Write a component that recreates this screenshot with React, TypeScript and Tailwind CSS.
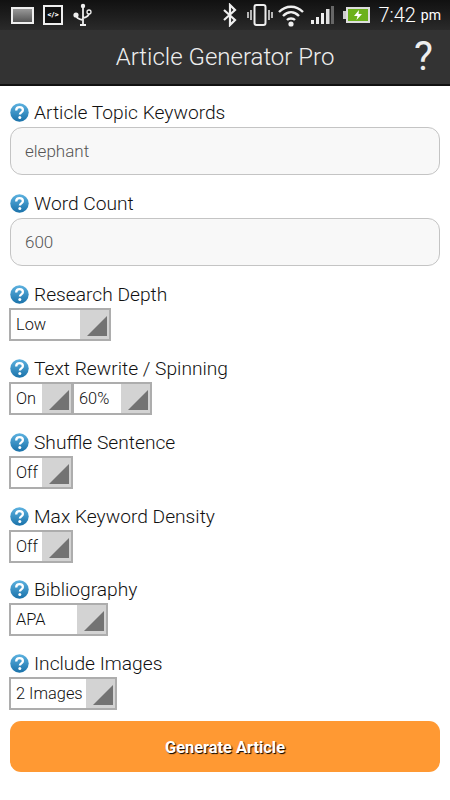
const font = { fontFamily: '"Roboto", "Open Sans", sans-serif' };

function HelpIcon() {
  return (
    <svg width="19" height="19" viewBox="0 0 19 19" className="shrink-0 -mt-[2px]">
      <defs>
        <linearGradient id="helpBlue" x1="0" y1="0" x2="0" y2="1">
          <stop offset="0" stopColor="#5db2e0" />
          <stop offset="1" stopColor="#1a72aa" />
        </linearGradient>
      </defs>
      <circle cx="9.5" cy="9.5" r="9.2" fill="url(#helpBlue)" />
      <path d="M6.2 7.4c0-2.1 1.5-3.3 3.4-3.3s3.3 1.1 3.3 2.9c0 2.3-3 2.4-3 4.4" fill="none" stroke="#fff" strokeWidth="2.3" />
      <circle cx="9.8" cy="14.4" r="1.5" fill="#fff" />
    </svg>
  );
}

function Label({ children, className }: { children: string; className?: string }) {
  return (
    <div className={`flex items-center h-[24px] gap-[5px] ${className || ""}`}>
      <HelpIcon />
      <span className="text-[19.2px] font-light text-[#111] whitespace-nowrap leading-none -mt-[1px]">{children}</span>
    </div>
  );
}

function TextBox({ value }: { value: string }) {
  return (
    <div className="h-[48px] mt-[2px] rounded-[12px] border border-[#c4c4c4] bg-[#f8f8f8] flex items-center pl-[14px] pt-[2px] text-[17px] font-light text-[#555]">
      {value}
    </div>
  );
}

function Select({ value, width }: { value: string; width: string }) {
  return (
    <div className={`${width} h-[33px] flex border-2 border-[#adadad] bg-white -ml-px`}>
      <div className="flex-1 flex items-center pl-[5px] pt-[1px] text-[16.4px] font-light text-[#111] whitespace-nowrap">{value}</div>
      <div className="w-[29px] bg-[#d3d3d3] flex items-end justify-end pb-[3px] pr-[2px]">
        <svg width="20" height="20" viewBox="0 0 20 20">
          <polygon points="0,20 20,0 20,20" fill="#737373" />
        </svg>
      </div>
    </div>
  );
}

function StatusBar() {
  return (
    <div className="h-[30px] bg-gradient-to-b from-[#111] to-[#2a2a2a] flex items-center text-white">
      <div className="flex items-center pl-[11px]">
        <div className="w-[23px] h-[17px] border-2 border-[#eee] bg-gradient-to-b from-[#999] to-[#555]" />
        <div className="w-[20px] h-[20px] ml-[9px] border-2 border-[#eee] bg-[#111] flex items-center justify-center text-[8px] font-bold">&lt;/&gt;</div>
        <svg width="20" height="24" viewBox="0 0 20 24" className="ml-[10px]">
          <path d="M10 3V21M10 17C4 16 3 14 3 12M10 15C15 14 16 12 16 10" fill="none" stroke="#eee" strokeWidth="1.8" />
          <circle cx="10" cy="3" r="2.2" fill="#eee" />
          <circle cx="3" cy="12" r="2.6" fill="#eee" />
          <circle cx="16" cy="9" r="2" fill="#111" stroke="#eee" strokeWidth="1.3" />
          <path d="M7 22H13" stroke="#eee" strokeWidth="2" />
        </svg>
      </div>
      <div className="ml-auto flex items-center pr-[9px]">
        <svg width="16" height="24" viewBox="0 0 16 24">
          <path d="M2 7L13 17L8 22V2L13 7L2 17" fill="none" stroke="#eee" strokeWidth="2.2" />
        </svg>
        <svg width="28" height="24" viewBox="0 0 28 24" className="ml-[8px]">
          <rect x="8.5" y="2" width="11" height="20" rx="2" fill="none" stroke="#eee" strokeWidth="2" />
          <path d="M5 7V17M2 9V15M23 7V17M26 9V15" stroke="#ddd" strokeWidth="1.6" />
        </svg>
        <svg width="28" height="24" viewBox="0 0 28 24" className="ml-[3px]">
          <path d="M2 9C9 2 19 2 26 9M6 13C11 8 17 8 22 13M10 17C12 15 16 15 18 17" fill="none" stroke="#eee" strokeWidth="2.4" />
          <circle cx="14" cy="21" r="2.6" fill="#eee" />
        </svg>
        <svg width="24" height="20" viewBox="0 0 24 20" className="ml-[5px]">
          <rect x="1" y="15" width="3" height="4" fill="#eee" />
          <rect x="6" y="12" width="3" height="7" fill="#eee" />
          <rect x="11" y="8" width="3" height="11" fill="#eee" />
          <rect x="16" y="4" width="3.5" height="15" fill="#ddd" />
          <rect x="21" y="1" width="3" height="18" fill="#666" />
        </svg>
        <div className="ml-[9px] flex items-center">
          <div className="w-[3px] h-[8px] bg-[#ccc]" />
          <div className="w-[24px] h-[16px] border-2 border-[#ddd] bg-[#6cb11b] flex items-center justify-center">
            <svg width="10" height="10" viewBox="0 0 10 10">
              <polygon points="6,0 1,6 4.5,6 3.5,10 9,4 5.5,4" fill="#fff" />
            </svg>
          </div>
        </div>
        <span className="ml-[8px] text-[20px] leading-none font-light">7:42</span>
        <span className="ml-[5px] text-[14px] leading-none">pm</span>
      </div>
    </div>
  );
}

export default function App() {
  return (
    <div className="w-[450px] h-[800px] bg-white overflow-hidden" style={font}>
      <StatusBar />
      <div className="h-[56px] bg-[#333] border-b-2 border-[#111] flex items-center relative">
        <div className="flex-1 text-center text-[24px] font-light text-[#eee]">Article Generator Pro</div>
        <div className="absolute right-[17px] top-[5px] text-[40px] leading-[44px] text-[#eee]">?</div>
      </div>
      <div className="px-[10px]">
        <Label className="mt-[15px]">Article Topic Keywords</Label>
        <TextBox value="elephant" />
        <Label className="mt-[17px]">Word Count</Label>
        <TextBox value="600" />
        <Label className="mt-[17px]">Research Depth</Label>
        <div className="mt-px"><Select value="Low" width="w-[102px]" /></div>
        <Label className="mt-[16px]">Text Rewrite / Spinning</Label>
        <div className="flex mt-px">
          <Select value="On" width="w-[64px]" />
          <Select value="60%" width="w-[80px]" />
        </div>
        <Label className="mt-[16px]">Shuffle Sentence</Label>
        <div className="mt-px"><Select value="Off" width="w-[64px]" /></div>
        <Label className="mt-[16px]">Max Keyword Density</Label>
        <div className="mt-px"><Select value="Off" width="w-[64px]" /></div>
        <Label className="mt-[15px]">Bibliography</Label>
        <div className="mt-px"><Select value="APA" width="w-[99px]" /></div>
        <Label className="mt-[16px]">Include Images</Label>
        <div className="mt-px"><Select value="2 Images" width="w-[108px]" /></div>
        <button className="mt-[11px] w-full h-[51px] pt-[3px] rounded-[11px] bg-[#ff9933] text-white text-[16.4px] font-bold [text-shadow:1px_1px_1px_#000]">
          Generate Article
        </button>
      </div>
    </div>
  );
}
